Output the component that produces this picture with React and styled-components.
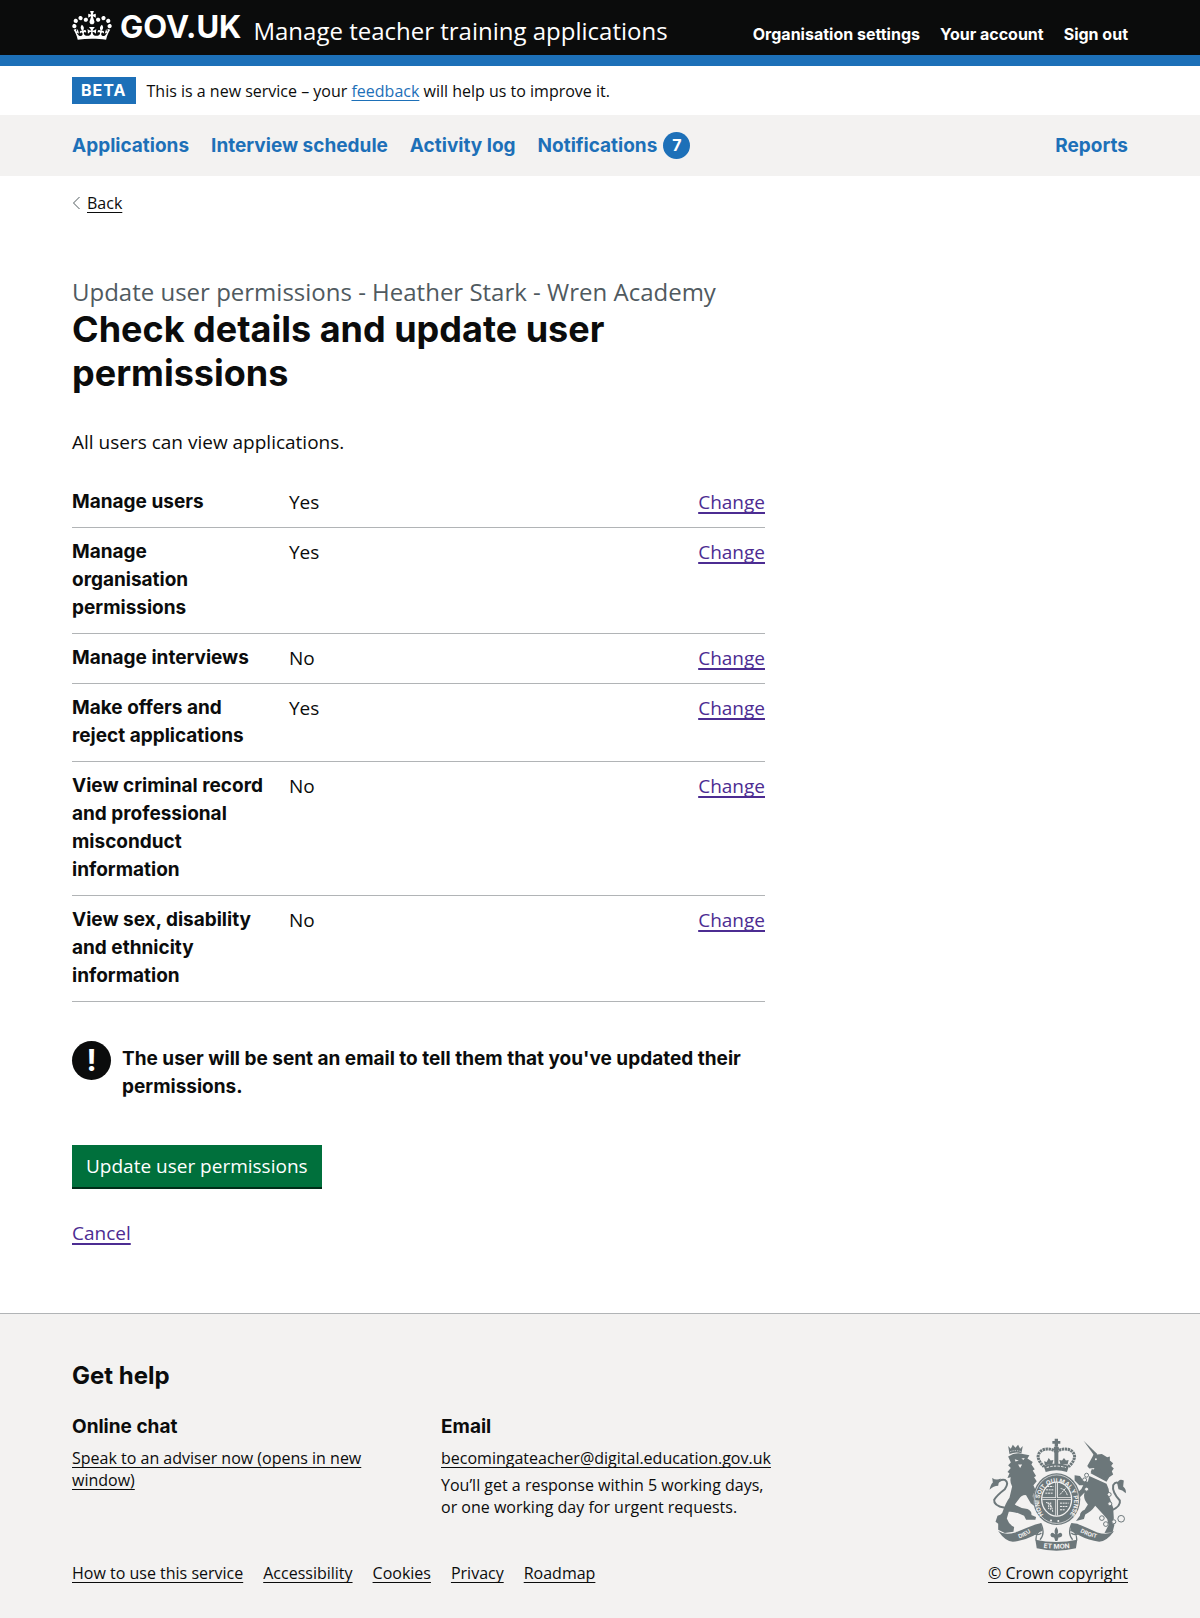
import React from "react";
import styled, { createGlobalStyle } from "styled-components";

const color = {
  ink: "#0b0c0c",
  blue: "#1d70b8",
  purple: "#4c2c92",
  grey: "#f3f2f1",
  rule: "#b1b4b6",
  muted: "#505a5f",
  crest: "#6c777a",
  green: "#00703c",
  greenShade: "#002d18",
};

const regular = `"Open Sans", "Noto Sans", sans-serif`;
const bold = `Inter, "Liberation Sans", sans-serif`;

const GlobalStyle = createGlobalStyle`
  *, *::before, *::after { box-sizing: border-box; }
  html { background: ${color.grey}; }
  body {
    margin: 0;
    background: #fff;
    color: ${color.ink};
    font: 400 19px/28px ${regular};
  }
  h1, h2, h3, p, dl, dd, ul { margin: 0; padding: 0; }
  ul { list-style: none; }
`;

const Container = styled.div`
  max-width: 1056px;
  margin: 0 auto;

  @media (max-width: 1110px) {
    margin: 0 30px;
  }

  @media (max-width: 640px) {
    margin: 0 15px;
  }
`;

/* Header */

const HeaderBar = styled.header`
  background: ${color.ink};
  border-bottom: 11px solid ${color.blue};
  color: #fff;
`;

const HeaderRow = styled(Container)`
  display: flex;
  flex-wrap: wrap;
  align-items: baseline;
  column-gap: 12px;
  min-height: 54px;
  padding: 8px 0;
`;

const Logo = styled.a`
  display: flex;
  gap: 8px;
  color: #fff;
  font: 700 31px/37px ${bold};
  text-decoration: none;

  svg {
    width: 40px;
    height: 29px;
    margin-top: 3px;
  }
`;

const ServiceName = styled.a`
  color: #fff;
  font-size: 24px;
  line-height: 30px;
  text-decoration: none;
`;

const AccountLinks = styled.ul`
  display: flex;
  flex-wrap: wrap;
  gap: 0 20px;
  margin-left: auto;
`;

const AccountLink = styled.a`
  color: #fff;
  font: 700 16px/20px ${bold};
  text-decoration: none;
`;

/* Phase banner */

const PhaseRow = styled(Container)`
  display: flex;
  align-items: center;
  gap: 11px;
  padding: 11px 0;
`;

const PhaseTag = styled.strong`
  padding: 0 9px;
  background: ${color.blue};
  color: #fff;
  font: 700 16px/27px ${bold};
  letter-spacing: 1px;
`;

const PhaseText = styled.span`
  font-size: 16px;
  line-height: 22px;
`;

/* Primary navigation */

const NavBar = styled.nav`
  background: ${color.grey};
`;

const NavRow = styled(Container)`
  padding: 17px 0;
`;

const NavList = styled.ul`
  display: flex;
  flex-wrap: wrap;
  gap: 0 22px;
`;

const NavItem = styled.li`
  margin-left: ${(p) => (p.$end ? "auto" : "0")};
`;

const NavLink = styled.a`
  display: flex;
  align-items: center;
  gap: 6px;
  color: ${color.blue};
  font: 700 19px/27px ${bold};
  text-decoration: none;
`;

const Count = styled.span`
  width: 27px;
  height: 27px;
  border-radius: 50%;
  background: ${color.blue};
  color: #fff;
  font-size: 16px;
  text-align: center;
`;

/* Page content */

const TextLink = styled.a`
  color: ${(p) => color[p.$tone || "ink"]};
  text-decoration-thickness: ${(p) => (p.$thick ? "2px" : "1px")};
  text-underline-offset: 3px;
  text-decoration-skip-ink: none;
`;

const BackLink = styled(TextLink)`
  display: inline-block;
  margin-top: 17px;
  font-size: 16px;
  line-height: 20px;
`;

const BackRow = styled.div`
  display: flex;
  align-items: baseline;
  gap: 7px;

  svg {
    width: 8px;
    height: 14px;
    align-self: flex-end;
    margin-bottom: 3px;
  }
`;

const Main = styled.main`
  padding: 64px 0 66px;
`;

const Column = styled.div`
  max-width: 693px;
`;

const Caption = styled.span`
  display: block;
  color: ${color.muted};
  font-size: 24px;
  line-height: 30px;
`;

const Title = styled.h1`
  margin-bottom: 33px;
  font: 700 36px/44px ${bold};
`;

const SummaryList = styled.dl`
  margin-top: 22px;
`;

const SummaryRow = styled.div`
  display: grid;
  grid-template-columns: 217px 1fr auto;
  padding: 10px 0 11px;
  border-bottom: 1px solid ${color.rule};
`;

const SummaryKey = styled.dt`
  padding-right: 24px;
  font-family: ${bold};
  font-weight: 700;
`;

const Warning = styled.div`
  display: flex;
  gap: 11px;
  margin-top: 39px;
`;

const WarningIcon = styled.span`
  flex: none;
  width: 39px;
  height: 39px;
  border-radius: 50%;
  background: ${color.ink};
  color: #fff;
  font: 700 30px/38px ${bold};
  text-align: center;
`;

const WarningText = styled.strong`
  padding-top: 4px;
  font: 700 19px/28px ${bold};
`;

const SubmitButton = styled.button`
  display: block;
  margin: 44px 0 32px;
  padding: 7px 14px;
  border: 0;
  border-radius: 0;
  background: ${color.green};
  box-shadow: 0 2px 0 ${color.greenShade};
  color: #fff;
  font: 400 19px/28px ${regular};
  cursor: pointer;
`;

/* Footer */

const FooterBar = styled.footer`
  border-top: 1px solid ${color.rule};
  background: ${color.grey};
  font-size: 16px;
  line-height: 22px;
`;

const FooterRow = styled(Container)`
  display: flex;
  flex-wrap: wrap;
  align-items: flex-end;
  justify-content: space-between;
  gap: 30px;
  padding: 47px 0 33px;
`;

const HelpTitle = styled.h2`
  margin-bottom: 22px;
  font: 700 24px/30px ${bold};
`;

const HelpColumns = styled.div`
  display: grid;
  grid-template-columns: repeat(2, minmax(0, 345px));
  gap: 24px;
  margin-bottom: 44px;

  @media (max-width: 760px) {
    grid-template-columns: 1fr;
  }
`;

const HelpHeading = styled.h3`
  margin-bottom: 6px;
  font: 700 19px/28px ${bold};
`;

const HelpText = styled.p`
  & + & {
    margin-top: 5px;
  }
`;

const FooterLinks = styled.ul`
  display: flex;
  flex-wrap: wrap;
  gap: 0 20px;
`;

const CopyrightLink = styled(TextLink)`
  display: flex;
  flex-direction: column;
  align-items: center;
  gap: 11px;

  svg {
    width: 138px;
    height: 113px;
  }
`;

const MottoText = styled.text`
  fill: ${color.grey};
  font: 700 ${(p) => p.$size || 17}px ${bold};
  text-anchor: middle;
`;

function Crown() {
  return (
    <svg viewBox="0 0 132 97" fill="currentColor" aria-hidden="true">
      <path
        fillRule="evenodd"
        d="M25 30.2c3.5 1.5 7.7-.2 9.1-3.7 1.5-3.6-.2-7.8-3.9-9.2-3.6-1.4-7.6.3-9.1 3.9-1.4 3.5.3 7.5 3.9 9zM9 39.5c3.6 1.5 7.8-.2 9.2-3.7 1.5-3.6-.2-7.8-3.9-9.1-3.6-1.5-7.6.2-9.1 3.8-1.4 3.5.3 7.5 3.8 9zM4.4 57.2c3.5 1.5 7.7-.2 9.1-3.8 1.5-3.6-.2-7.7-3.9-9.1-3.5-1.5-7.6.3-9.1 3.8-1.4 3.5.3 7.6 3.9 9.1zm38.3-21.4c3.5 1.5 7.7-.2 9.1-3.8 1.5-3.6-.2-7.7-3.9-9.1-3.6-1.5-7.6.3-9.1 3.8-1.3 3.6.4 7.7 3.9 9.1zm64.4-5.6c-3.6 1.5-7.8-.2-9.1-3.7-1.5-3.6.2-7.8 3.8-9.2 3.6-1.4 7.7.3 9.2 3.9 1.3 3.5-.4 7.5-3.9 9zm15.9 9.3c-3.6 1.5-7.7-.2-9.1-3.7-1.5-3.6.2-7.8 3.7-9.1 3.6-1.5 7.7.2 9.2 3.8 1.5 3.5-.3 7.5-3.8 9zm4.7 17.7c-3.6 1.5-7.8-.2-9.2-3.8-1.5-3.6.2-7.7 3.9-9.1 3.6-1.5 7.7.3 9.2 3.8 1.3 3.5-.4 7.6-3.9 9.1zM89.3 35.8c-3.6 1.5-7.8-.2-9.2-3.8-1.4-3.6.2-7.7 3.9-9.1 3.6-1.5 7.7.3 9.2 3.8 1.4 3.6-.3 7.7-3.9 9.1zM69.7 17.7l8.9 4.7V9.3l-8.9 2.8c-.2-.3-.5-.6-.9-.9L72.4 0H59.6l3.5 11.2c-.3.3-.6.5-.9.9l-8.8-2.8v13.1l8.8-4.7c.3.3.6.7.9.9l-5 15.4v.1c-.2.8-.4 1.6-.4 2.4 0 4.1 3.1 7.5 7 8.1h.2c.3 0 .7.1 1 .1.4 0 .7 0 1-.1h.2c4-.6 7.1-4.1 7.1-8.1 0-.8-.1-1.7-.4-2.4V34l-5.1-15.4c.4-.2.7-.6 1-.9zM66 92.8c16.9 0 32.8 1.1 47.1 3.2 4-16.9 8.9-26.7 14-33.5l-9.6-3.4c1 4.9 1.1 7.2 0 10.2-1.5-1.4-3-4.3-4.2-8.7L108.6 76c2.8-2 5-3.2 7.5-3.3-4.4 9.4-10 11.9-13.6 11.2-4.3-.8-6.3-4.6-5.6-7.9 1-4.7 5.7-5.9 8-.5 4.3-8.7-3-11.4-7.6-8.8 7.1-7.2 7.9-13.5 2.1-21.1-8 6.1-8.1 12.3-4.5 20.8-4.7-5.4-12.1-2.5-9.5 6.2 3.4-5.2 7.9-2 7.2 3.1-.6 4.3-6.4 7.8-13.5 7.2-10.3-.9-10.9-8-11.2-13.8 2.5-.5 7.1 1.8 11 7.3L80.2 60c-4.1 4.4-8 5.3-12.3 5.4 1.4-4.4 8-11.6 8-11.6H55.5s6.4 7.2 7.9 11.6c-4.2-.1-8-1-12.3-5.4l1.4 16.4c3.9-5.5 8.5-7.7 10.9-7.3-.3 5.8-.9 12.8-11.1 13.8-7.2.6-12.9-2.9-13.5-7.2-.7-5 3.8-8.3 7.1-3.1 2.7-8.7-4.6-11.6-9.4-6.2 3.7-8.5 3.6-14.7-4.6-20.8-5.8 7.6-5 13.9 2.2 21.1-4.7-2.6-11.9.1-7.7 8.8 2.3-5.5 7.1-4.2 8.1.5.7 3.3-1.3 7.1-5.7 7.9-3.5.7-9-1.8-13.5-11.2 2.5.1 4.7 1.3 7.5 3.3l-4.7-15.4c-1.2 4.4-2.7 7.2-4.3 8.7-1.1-3-.9-5.3 0-10.2l-9.5 3.4c5 6.9 9.9 16.7 14 33.5 14.8-2.1 30.8-3.2 47.7-3.2z"
      />
    </svg>
  );
}

function Chevron() {
  return (
    <svg viewBox="0 0 8 14" fill="none" stroke={color.muted} aria-hidden="true">
      <path d="M7.5 1 1.5 7l6 6" />
    </svg>
  );
}

function CoatOfArms() {
  const c = color.crest;
  const g = color.grey;
  return (
    <svg viewBox="57 58 414 340" fill={c} aria-hidden="true">
      {/* ribbon */}
      <path d="M84 338 Q104 352 136 342 Q164 330 196 318 L214 314 L216 334 Q204 344 190 352 Q160 368 128 370 Q106 370 84 338Z" />
      <path d="M433 338 Q414 352 382 342 Q356 330 322 316 L304 314 L302 334 Q316 346 330 352 Q356 366 388 370 Q410 370 433 338Z" />
      <path d="M196 364 Q258 378 322 364 L318 390 Q260 404 200 390Z" />
      <path
        d="M214 316 Q184 330 192 346 Q206 352 214 344 M198 366 Q196 340 216 336 M304 316 Q334 330 326 346 Q312 352 304 344 M320 366 Q322 340 302 336 M214 318 Q226 346 210 364 M304 318 Q292 346 308 364"
        fill="none"
        stroke={c}
        strokeWidth="4"
      />
      <path d="M259 326 Q268 338 262 348 Q274 338 277 350 Q276 358 266 357 L262 368 H256 L252 357 Q242 358 241 350 Q244 338 256 348 Q250 338 259 326Z" />

      {/* crown above the garter */}
      <path d="M254 60 h10 v7 h7 v8 h-7 v8 h-10 v-8 h-7 v-8 h7Z" />
      <circle cx="259" cy="90" r="8" />
      <path
        d="M259 100 C238 84 206 90 204 114 Q206 130 222 144 M259 100 C280 84 312 90 314 114 Q312 130 296 144"
        fill="none"
        stroke={c}
        strokeWidth="9"
        strokeDasharray="7 2"
      />
      <path d="M253 96 h12 v40 h-12Z M221 142 Q259 128 297 142 L291 160 Q259 150 227 160Z" />
      <path d="M236 118 l6 8 8-2 -3 12 -22 4 -3-12 8 2Z M282 118 l6 8 8-2 -3 14 -22-2 -3-12 8 2Z" />
      <path d="M230 147 Q259 138 288 147" fill="none" stroke={g} strokeWidth="3" strokeDasharray="7 4" />

      {/* lion */}
      <path d="M114 82 l8 8 6-12 8 9 8-9 6 12 8-8 -4 22 Q136 98 118 106Z" />
      <path
        fill="none"
        stroke={g}
        strokeWidth="2"
        strokeDasharray="4 3"
        d="M120 99 Q136 93 153 99"
      />
      <path d="M114 114 Q136 100 158 106 L178 110 L172 120 L188 130 L184 138 L194 152 L188 156 L198 172 L192 176 L200 188 L190 200 L196 214 L188 232 L192 262 L182 254 L168 230 Q156 228 146 242 L134 258 Q150 270 172 272 Q186 278 184 290 L198 296 L196 304 L168 304 L162 292 L148 286 Q128 278 116 280 L110 300 Q116 318 132 326 L130 340 L104 344 L84 334 L84 316 L76 310 L82 292 Q92 290 96 284 Q108 250 118 238 L126 204 Q118 190 122 176 L112 178 L118 164 L112 160 L122 148 L114 140 L122 132Z" />
      <path d="M134 122 l12 4 -10 3Z M154 120 l10-2 -4 6Z M144 138 l12 0 -6 10Z" fill={g} />
      <path
        d="M104 268 Q70 262 72 244 Q80 230 104 212 Q118 192 104 184 Q90 180 76 198"
        fill="none"
        stroke={c}
        strokeWidth="6"
      />
      <path d="M58 214 Q62 196 68 192 L66 178 Q78 186 92 180 Q84 190 84 202 Q70 202 58 214Z" />

      {/* unicorn */}
      <path d="M341 66 L382 106 L374 112Z" />
      <path d="M352 142 Q362 126 368 114 L374 102 L382 108 L396 106 L412 116 L420 114 L420 126 L430 134 L424 142 L432 150 L426 158 L430 168 L418 176 L410 190 L362 164 L374 148 L358 150Z" />
      <path d="M358 172 L410 196 Q420 214 418 234 L430 268 L432 300 L426 314 L434 318 L428 342 L404 344 L416 320 L412 302 L396 284 L376 262 Q364 280 346 288 L342 302 L318 308 L330 292 Q330 280 344 274 L354 258 Q338 240 344 222 L330 236 L318 226 L334 212 L340 200 L328 200 L314 186 L314 170 L330 172 L340 186 L354 190Z" />
      <circle cx="378" cy="122" r="3" fill={g} />
      <path
        d="M364 162 l3-8 8 8 4-8 7 11 6-8 5 13 8-6 2 14"
        fill="none"
        stroke={c}
        strokeWidth="4"
      />
      <path
        d="M424 276 Q454 264 450 246 Q426 220 430 200 Q440 184 452 200"
        fill="none"
        stroke={c}
        strokeWidth="6"
      />
      <path d="M442 194 Q448 178 462 186 L460 204 Q470 212 468 224 Q458 214 446 212Z" />
      <g fill={g} stroke={c} strokeWidth="3">
        <circle cx="350" cy="170" r="6" />
        <circle cx="344" cy="184" r="6" />
        <circle cx="350" cy="212" r="6" />
        <circle cx="418" cy="228" r="6" />
        <circle cx="420" cy="256" r="6" />
        <circle cx="396" cy="299" r="7" />
        <circle cx="408" cy="317" r="7" />
        <circle cx="432" cy="310" r="6" />
        <circle cx="454" cy="301" r="10" />
      </g>

      {/* garter and shield */}
      <ellipse cx="260" cy="242" rx="71" ry="78" />
      <ellipse cx="260" cy="242" rx="66" ry="73" fill="none" stroke={g} strokeWidth="2" />
      <ellipse cx="260" cy="242" rx="47" ry="53" fill={g} />
      <ellipse cx="260" cy="242" rx="43" ry="49" />
      <path
        d="M260 193 V291 M217 240 H303"
        stroke={g}
        strokeWidth="8"
      />
      <path d="M260 193 V291 M217 240 H303" stroke={c} strokeWidth="3" />
      <path
        d="M228 214 h22 M226 224 h24 M232 204 h18 M270 228 l18-20 M272 210 q14 2 20 20 M270 254 h26 M270 264 h24 M270 274 h16 M228 252 q18 4 20 28 M236 252 v20 M242 252 v24"
        fill="none"
        stroke={g}
        strokeWidth="3"
        strokeDasharray="6 2"
      />
      <path id="garter" d="M224 292 A52 58 0 1 1 296 292" fill="none" />
      <MottoText $size={18}>
        <textPath href="#garter" startOffset="50%">
          HONI SOIT QUI MAL Y PENSE
        </textPath>
      </MottoText>
      <circle cx="243" cy="306" r="3" fill={g} />
      <circle cx="265" cy="308" r="3" fill={g} />
      <path id="dieu" d="M136 364 Q166 356 192 334" fill="none" />
      <MottoText>
        <textPath href="#dieu" startOffset="50%">
          DIEU
        </textPath>
      </MottoText>
      <path id="droit" d="M320 334 Q346 354 392 362" fill="none" />
      <MottoText>
        <textPath href="#droit" startOffset="50%">
          DROIT
        </textPath>
      </MottoText>
      <path id="etmon" d="M200 386 Q260 396 320 386" fill="none" />
      <MottoText $size={20}>
        <textPath href="#etmon" startOffset="50%">
          ET MON
        </textPath>
      </MottoText>
    </svg>
  );
}

const accountLinks = ["Organisation settings", "Your account", "Sign out"];

const navItems = [
  { label: "Applications" },
  { label: "Interview schedule" },
  { label: "Activity log" },
  { label: "Notifications", count: 7 },
  { label: "Reports", end: true },
];

const permissions = [
  ["Manage users", "Yes"],
  ["Manage organisation permissions", "Yes"],
  ["Manage interviews", "No"],
  ["Make offers and reject applications", "Yes"],
  ["View criminal record and professional misconduct information", "No"],
  ["View sex, disability and ethnicity information", "No"],
];

const footerLinks = ["How to use this service", "Accessibility", "Cookies", "Privacy", "Roadmap"];

export default function App() {
  return (
    <>
      <GlobalStyle />
      <HeaderBar>
        <HeaderRow>
          <Logo href="#">
            <Crown />
            GOV.UK
          </Logo>
          <ServiceName href="#">Manage teacher training applications</ServiceName>
          <AccountLinks>
            {accountLinks.map((label) => (
              <li key={label}>
                <AccountLink href="#">{label}</AccountLink>
              </li>
            ))}
          </AccountLinks>
        </HeaderRow>
      </HeaderBar>

      <PhaseRow>
        <PhaseTag>BETA</PhaseTag>
        <PhaseText>
          This is a new service – your{" "}
          <TextLink href="#" $tone="blue">
            feedback
          </TextLink>{" "}
          will help us to improve it.
        </PhaseText>
      </PhaseRow>

      <NavBar>
        <NavRow>
          <NavList>
            {navItems.map((item) => (
              <NavItem key={item.label} $end={item.end}>
                <NavLink href="#">
                  {item.label}
                  {item.count && <Count>{item.count}</Count>}
                </NavLink>
              </NavItem>
            ))}
          </NavList>
        </NavRow>
      </NavBar>

      <Container>
        <BackRow>
          <Chevron />
          <BackLink href="#">Back</BackLink>
        </BackRow>
        <Main>
          <Column>
            <Caption>Update user permissions - Heather Stark - Wren Academy</Caption>
            <Title>Check details and update user permissions</Title>
            <p>All users can view applications.</p>
            <SummaryList>
              {permissions.map(([name, value]) => (
                <SummaryRow key={name}>
                  <SummaryKey>{name}</SummaryKey>
                  <dd>{value}</dd>
                  <dd>
                    <TextLink href="#" $tone="purple" $thick>
                      Change
                    </TextLink>
                  </dd>
                </SummaryRow>
              ))}
            </SummaryList>
            <Warning>
              <WarningIcon aria-hidden="true">!</WarningIcon>
              <WarningText>
                The user will be sent an email to tell them that you've updated their permissions.
              </WarningText>
            </Warning>
            <SubmitButton type="submit">Update user permissions</SubmitButton>
            <p>
              <TextLink href="#" $tone="purple" $thick>
                Cancel
              </TextLink>
            </p>
          </Column>
        </Main>
      </Container>

      <FooterBar>
        <FooterRow>
          <div>
            <HelpTitle>Get help</HelpTitle>
            <HelpColumns>
              <div>
                <HelpHeading>Online chat</HelpHeading>
                <HelpText>
                  <TextLink href="#">Speak to an adviser now (opens in new window)</TextLink>
                </HelpText>
              </div>
              <div>
                <HelpHeading>Email</HelpHeading>
                <HelpText>
                  <TextLink href="#">becomingateacher@digital.education.gov.uk</TextLink>
                </HelpText>
                <HelpText>
                  You’ll get a response within 5 working days,
                  <br />
                  or one working day for urgent requests.
                </HelpText>
              </div>
            </HelpColumns>
            <FooterLinks>
              {footerLinks.map((label) => (
                <li key={label}>
                  <TextLink href="#">{label}</TextLink>
                </li>
              ))}
            </FooterLinks>
          </div>
          <CopyrightLink href="#">
            <CoatOfArms />
            © Crown copyright
          </CopyrightLink>
        </FooterRow>
      </FooterBar>
    </>
  );
}
